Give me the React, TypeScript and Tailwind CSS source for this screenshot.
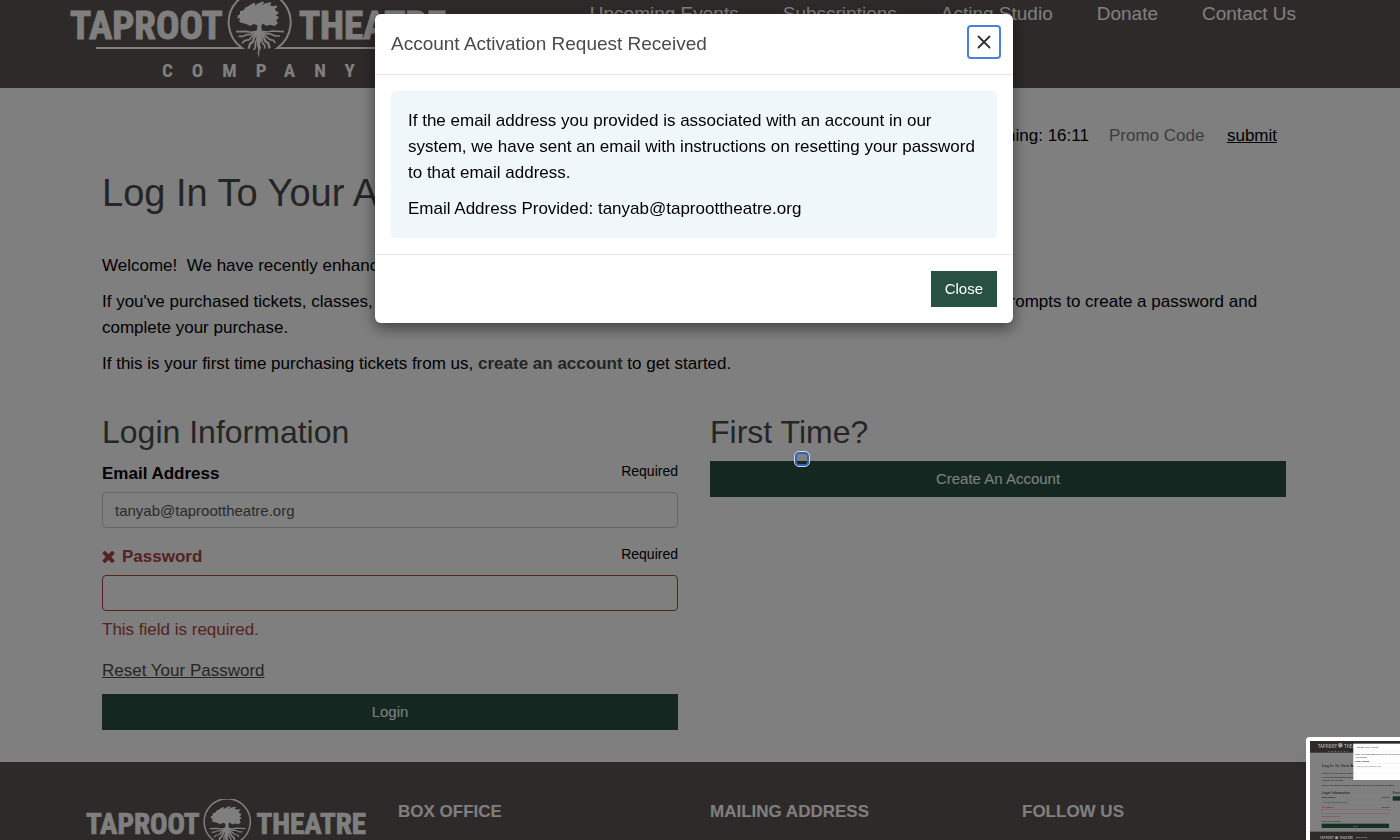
import { useState } from 'react';
import { X } from 'lucide-react';

const NAV_LINKS = ['Upcoming Events', 'Subscriptions', 'Acting Studio', 'Donate', 'Contact Us'];
const FOOTER_SECTIONS = ['Box Office', 'Mailing Address', 'Follow Us'];

// ─── Logo ────────────────────────────────────────────────────────────────────
const Logo = ({ className }: { className: string }) => (
  <svg
    viewBox="0 -8 376 96"
    className={className}
    fill="#ffffff"
    fontFamily="'Liberation Sans Narrow', 'Roboto Condensed', 'Liberation Sans', sans-serif"
    fontWeight="bold"
    role="img"
    aria-label="Taproot Theatre Company"
  >
    <g fontSize="39" stroke="#ffffff" strokeWidth="1">
      <text x="0" y="39">TAPROOT</text>
      <text x="376" y="39" textAnchor="end">THEATRE</text>
    </g>
    <text x="92" y="77" fontSize="19" letterSpacing="19">COMPANY</text>

    {/* Emblem */}
    <g transform="translate(150 0) scale(0.3333)">
      <path
        fill="none"
        stroke="#ffffff"
        strokeWidth="6"
        d="M-372 144H66A93 93 0 1 1 172 144H603"
      />
      {/* Canopy */}
      <path d="M80 24l14-10 12 2 10-6 12 4 12-6 10 8 14 4 2 10 8 8-6 8 6 8-6 8 6 8-10 8-14-4-14 2-12-8-12 8-10-4-12 6-10-6-12-2-10-6 2-8-8-8 8-6 0-8 12-4 4-8z" />
      <g fill="none" stroke="#ffffff" strokeWidth="7" strokeLinecap="round">
        <path d="M82 24l20-12M66 38l16-8M56 52l14-8M62 64l20-8M82 70l20-10M112 16l16-8M138 16l12-6M150 28l18-8M158 46l14-8M160 60l12-8M140 74l26-10" />
      </g>
      <path d="M104 60l8 10 8-8 10 4-6 12 2 16 6 6-10 6 2 18-4 8 3 12-5 10-1 20-4-14 2-14-5-12 1-14-2-16-10-6 12-8 1-16z" />
      {/* Roots */}
      <g fill="none" stroke="#ffffff" strokeWidth="5" strokeLinejoin="round">
        <path d="M112 94l-20 3-12-3-32 1" />
        <path d="M110 97l-16 6-14 1-12 5-12 0" />
        <path d="M110 99l-14 10-8 10-14 3-8 8" />
        <path strokeWidth="7" d="M112 98l-10 16-4 12-8 6-4 14" />
        <path d="M114 102l-4 18-4 8 0 14-5 8" />
        <path d="M122 94l20 2 14-3 36 2" />
        <path d="M124 97l16 5 12 0 14 6 14 0" />
        <path d="M124 99l14 10 10 9 12 3 6 8" />
        <path strokeWidth="7" d="M122 98l10 16 4 10 9 6 4 15" />
        <path d="M120 102l6 18 2 10 6 6 0 10" />
      </g>
    </g>
  </svg>
);

// Thick cross in front of an invalid field's label
const ErrorMark = () => (
  <svg viewBox="302 366 1188 1188" className="h-3 w-[13px]" fill="currentColor" aria-hidden="true">
    <path d="M1490 1322q0 40-28 68l-136 136q-28 28-68 28t-68-28l-294-294-294 294q-28 28-68 28t-68-28l-136-136q-28-28-28-68t28-68l294-294-294-294q-28-28-28-68t28-68l136-136q28-28 68-28t68 28l294 294 294-294q28-28 68-28t68 28l136 136q28 28 28 68t-28 68l-294 294 294 294q28 28 28 68z" />
  </svg>
);

// ─── Screenshot preview in the corner ────────────────────────────────────────
const Preview = () => (
  <div className="fixed right-0 bottom-0 z-40 overflow-hidden rounded-tl border-t-4 border-l-4 border-white bg-white shadow-lg">
    <svg
      viewBox="12 12 270 297"
      className="block h-[99px] w-[90px]"
      fontFamily="'Liberation Sans', Arial, sans-serif"
      fontSize="6"
      aria-hidden="true"
    >
      <rect x="12" y="12" width="270" height="297" fill="#808080" />
      <rect x="12" y="12" width="270" height="35" fill="#2e2a29" />
      <g fill="#9a9a9a" fontWeight="bold" fontFamily="'Roboto Condensed', 'Liberation Sans', sans-serif">
        <text x="35" y="32" fontSize="15">TAPROOT</text>
        <text x="114" y="32" fontSize="15">THEATRE</text>
        <text x="67" y="44" fontSize="7" letterSpacing="5">COMPANY</text>
        <circle cx="103" cy="25" r="7" />
      </g>
      <g fill="#111111">
        <text x="47" y="90" fontSize="13">Log In To Your Account</text>
        <text x="47" y="111">Welcome! We have recently enhanced our system.</text>
        <text x="47" y="124">If you've purchased tickets, classes, or camps</text>
        <text x="47" y="132">complete your purchase.</text>
        <text x="47" y="146">If this is your first time purchasing tickets from us, create an account to get started.</text>
        <text x="47" y="172" fontSize="11">Login Information</text>
        <text x="260" y="172" fontSize="11">First Time?</text>
        <text x="47" y="184" fontWeight="bold">Email Address</text>
        <text x="227" y="184">Required</text>
        <text x="51" y="198" fill="#333333">tanyab@taproottheatre.org</text>
        <text x="227" y="213">Required</text>
        <text x="47" y="256">Reset Your Password</text>
      </g>
      <g fill="#862724">
        <text x="47" y="213" fontWeight="bold">✖ Password</text>
        <text x="47" y="239">This field is required.</text>
      </g>
      <rect x="47" y="189" width="202" height="13" fill="none" stroke="#757575" />
      <rect x="47" y="217" width="202" height="13" fill="none" stroke="#8a4a48" />
      <rect x="47" y="260" width="202" height="13" fill="#163026" />
      <rect x="260" y="178" width="30" height="13" fill="#163026" />
      <text x="141" y="269" fill="#9a9a9a">Login</text>
      <rect x="12" y="284" width="270" height="25" fill="#2e2a29" />
      <g fill="#9a9a9a" fontWeight="bold" fontFamily="'Roboto Condensed', 'Liberation Sans', sans-serif">
        <text x="41" y="306" fontSize="11">TAPROOT</text>
        <text x="100" y="306" fontSize="11">THEATRE</text>
        <circle cx="92" cy="302" r="5" />
        <text x="150" y="303" fontSize="7">BOX OFFICE</text>
        <text x="260" y="303" fontSize="7">MAILING</text>
      </g>
      <rect x="142" y="20" width="145" height="109" fill="#ffffff" />
      <path d="M142 42H282M142 110H282" stroke="#e5e5e5" />
      <g fill="#222222">
        <text x="149" y="34" fontSize="7">Activate Your Account</text>
        <text x="148" y="55">Enter your email address below. You will receive a</text>
        <text x="148" y="64">your account.</text>
        <text x="148" y="76" fontWeight="bold">Email Address</text>
        <text x="153" y="89" fill="#777777">tanyab@taproottheatre.org</text>
      </g>
      <rect x="148" y="80" width="140" height="13" fill="none" stroke="#dddddd" />
    </svg>
  </div>
);

// ─── Confirmation dialog ─────────────────────────────────────────────────────
const ActivationDialog = ({ email, onClose }: { email: string; onClose: () => void }) => (
  <div className="fixed inset-0 z-20 flex items-start justify-center bg-black/50 pt-[14px] pr-3">
    <div
      role="dialog"
      aria-modal="true"
      aria-labelledby="dialog-title"
      className="w-full max-w-[638px] rounded-md bg-white shadow-[0_5px_15px_rgba(0,0,0,0.5)]"
    >
      <div className="flex items-start justify-between border-b border-[#e5e5e5] pr-3 pl-4">
        <h4 id="dialog-title" className="text-[19px] leading-[60px] text-[#4a4a4a]">
          Account Activation Request Received
        </h4>
        <button
          type="button"
          aria-label="Close dialog"
          onClick={onClose}
          className="mt-[11px] flex h-[34px] w-[34px] items-center justify-center rounded border-2 border-[#4a80d9] text-[#333333]"
        >
          <X size={22} strokeWidth={2} />
        </button>
      </div>

      <div className="p-4">
        <div className="space-y-[10px] rounded bg-[#f0f7fb] px-[17px] pt-[17px] pb-4">
          <p>
            If the email address you provided is associated with an account in our system, we have
            sent an email with instructions on resetting your password to that email address.
          </p>
          <p>Email Address Provided: {email}</p>
        </div>
      </div>

      <div className="flex justify-end border-t border-[#e5e5e5] p-4">
        <button
          type="button"
          onClick={onClose}
          className="h-9 bg-[#285143] px-[14px] text-[15px] text-white"
        >
          Close
        </button>
      </div>
    </div>
  </div>
);

export default function App() {
  const [email, setEmail] = useState('tanyab@taproottheatre.org');
  const [password, setPassword] = useState('');
  const [dialogOpen, setDialogOpen] = useState(true);

  return (
    <div className="flex h-screen flex-col overflow-hidden bg-[#5c5452] font-['Liberation_Sans',Arial,sans-serif] text-[17px] leading-[26px] text-black">

      {/* Header */}
      <header className="shrink-0 pr-3">
        <div className="mx-auto flex max-w-[1248px] items-start justify-between">
          <Logo className="-mt-2 h-24 w-[376px]" />
          <nav className="flex gap-11 pr-[22px] text-[19px] leading-7 text-white">
            {NAV_LINKS.map((link) => (
              <a key={link} href="#">{link}</a>
            ))}
          </nav>
        </div>
      </header>

      {/* Page body */}
      <main className="shrink-0 bg-white pr-3">
        <div className="mx-auto max-w-[1248px] px-8 pt-[35px] pb-8">
          <div className="flex items-center justify-end pr-[9px]">
            <span className="mr-5">Time Remaining: 16:11</span>
            <input
              type="text"
              aria-label="Promo Code"
              placeholder="Promo Code"
              className="w-[98px] placeholder:text-[#777777] focus:outline-none"
            />
            <button type="button" className="ml-5 underline">submit</button>
          </div>

          <h1 className="mt-[23px] mb-[39px] text-[38px] leading-[42px] text-[#4a4a4a]">
            Log In To Your Account
          </h1>

          <div className="space-y-[10px]">
            <p>Welcome!&nbsp; We have recently enhanced our ticketing system.</p>
            <p>
              If you've purchased tickets, classes, or camp with us before, enter your email
              address to reset your login and follow the prompts to create a password and complete
              your purchase.
            </p>
            <p>
              If this is your first time purchasing tickets from us,{' '}
              <a href="#" className="font-bold text-[#4a4a4a]">create an account</a> to get started.
            </p>
          </div>

          <div className="mt-[37px] grid grid-cols-2 gap-8">
            <form onSubmit={(e) => e.preventDefault()}>
              <h2 className="mb-[11px] text-[32px] leading-9 text-[#4a4a4a]">Login Information</h2>

              {/* Email */}
              <div className="flex items-start justify-between">
                <label htmlFor="email" className="font-bold">Email Address</label>
                <span className="text-[14px] leading-5">Required</span>
              </div>
              <input
                id="email"
                type="email"
                value={email}
                onChange={(e) => setEmail(e.target.value)}
                className="mt-[5px] block h-9 w-full rounded border border-[#cccccc] px-3 text-[15px] text-[#555555] focus:outline-none"
              />

              {/* Password */}
              <div className="mt-4 flex items-start justify-between">
                <label htmlFor="password" className="flex items-center gap-[7px] font-bold text-[#a94442]">
                  <ErrorMark />
                  Password
                </label>
                <span className="text-[14px] leading-5">Required</span>
              </div>
              <input
                id="password"
                type="password"
                value={password}
                onChange={(e) => setPassword(e.target.value)}
                className="mt-[5px] block h-9 w-full rounded border border-[#a94442] px-3 text-[15px] text-[#555555] focus:outline-none"
              />
              <p className="mt-[6px] text-[#a94442]">This field is required.</p>

              <p className="mt-[15px] mb-[10px]">
                <a href="#" className="text-[#4a4a4a] underline">Reset Your Password</a>
              </p>
              <button type="submit" className="block h-9 w-full bg-[#285143] text-[15px] text-white">
                Login
              </button>
            </form>

            <section className="relative">
              <h2 className="mb-[11px] text-[32px] leading-9 text-[#4a4a4a]">First Time?</h2>
              <button type="button" className="block h-9 w-full bg-[#285143] text-[15px] text-white">
                Create An Account
              </button>
              <span className="absolute top-[38px] left-[85px] z-30 h-[14px] w-[14px] rounded border-2 border-[#2f62b5] outline outline-[#d5dbe5]" />
            </section>
          </div>
        </div>
      </main>

      {/* Footer */}
      <footer className="shrink-0 pr-3">
        <div className="mx-auto grid max-w-[1248px] grid-cols-4 pt-[37px] pb-8">
          <div className="px-4">
            <Logo className="block w-full" />
          </div>
          {FOOTER_SECTIONS.map((title) => (
            <h3 key={title} className="px-4 font-bold text-white uppercase">{title}</h3>
          ))}
        </div>
      </footer>

      {dialogOpen && <ActivationDialog email={email} onClose={() => setDialogOpen(false)} />}
      <Preview />
    </div>
  );
}
